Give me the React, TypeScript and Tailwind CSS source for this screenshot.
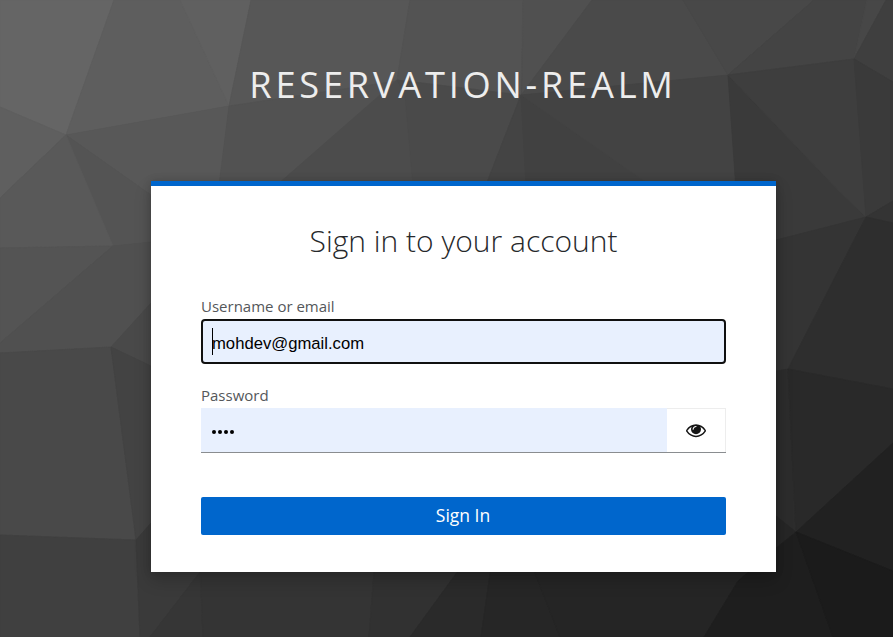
const facets: [string, string][] = [
  ['0,0 114,0 66,135 0,107', '#656565'],
  ['0,107 66,135 0,198', '#5f5f5f'],
  ['114,0 180,0 229,106 66,135', '#5e5e5e'],
  ['180,0 251,0 229,106', '#606060'],
  ['66,135 229,106 219,190 151,195', '#585858'],
  ['66,135 151,195 151,242 113,246', '#545454'],
  ['66,135 113,246 0,248 0,198', '#595959'],
  ['0,248 113,246 0,343', '#545454'],
  ['113,246 151,242 151,303 111,347 0,353 0,343', '#505050'],
  ['151,303 151,366 111,347', '#494949'],
  ['0,353 111,347 136,540 0,535', '#494949'],
  ['111,347 151,366 151,523 136,540', '#434343'],
  ['0,535 136,540 140,637 0,637', '#404040'],
  ['136,540 151,523 160,560 200,572 150,637 140,637', '#3a3a3a'],
  ['200,572 203,637 150,637', '#363636'],
  ['200,560 375,560 369,637 203,637', '#343434'],
  ['375,560 466,560 410,637 369,637', '#313131'],
  ['466,560 492,560 481,637 410,637', '#2a2a2a'],
  ['492,560 530,560 560,637 481,637', '#262626'],
  ['530,560 776,560 738,581 704,637 560,637', '#252525'],
  ['251,0 410,0 397,81 370,103 229,106', '#575757'],
  ['229,106 397,81 277,185 219,185', '#525252'],
  ['410,0 523,0 521,95 397,80', '#535353'],
  ['523,0 592,0 522,95', '#505050'],
  ['592,0 683,0 728,75 521,95', '#4a4a4a'],
  ['683,0 814,0 728,75', '#484848'],
  ['814,0 867,0 854,59 728,75', '#444444'],
  ['867,0 886,0 854,59', '#474747'],
  ['886,0 893,0 893,82 854,59', '#3f3f3f'],
  ['397,80 405,95 413,185 277,185', '#4c4c4c'],
  ['397,80 521,95 486,185 413,185 405,95', '#4a4a4a'],
  ['521,95 526,185 486,185', '#444444'],
  ['521,95 650,185 526,185', '#414141'],
  ['521,95 728,75 736,185 650,185', '#434343'],
  ['728,75 838,190 866,217 776,240 776,190 736,190', '#3a3a3a'],
  ['728,75 854,59 866,217 838,190', '#3e3e3e'],
  ['854,59 893,82 893,201 866,217', '#3a3a3a'],
  ['866,217 893,201 893,223', '#343434'],
  ['776,240 866,217 788,369 776,371', '#343434'],
  ['866,217 893,223 893,389 788,369', '#2e2e2e'],
  ['776,371 788,369 796,532 776,516', '#2c2c2c'],
  ['788,369 893,389 893,443 796,532', '#292929'],
  ['776,516 796,532 776,548', '#262626'],
  ['893,443 893,571 796,532', '#212121'],
  ['776,548 796,532 833,637 704,637 738,581', '#1e1e1e'],
  ['796,532 893,571 893,637 833,637', '#1b1b1b'],
];

function Background() {
  return (
    <svg aria-hidden="true" viewBox="0 0 893 637" preserveAspectRatio="none" className="absolute inset-0 size-full">
      {facets.map(([points, fill]) => (
        <polygon key={points} points={points} fill={fill} stroke={fill} strokeWidth="0.8" strokeLinejoin="round" />
      ))}
    </svg>
  );
}

function EyeIcon() {
  return (
    <svg viewBox="0 0 1792 1792" className="size-5" fill="currentColor">
      <path d="M1664 960q-152-236-381-353 61 104 61 225 0 185-131.5 316.5t-316.5 131.5-316.5-131.5-131.5-316.5q0-121 61-225-229 117-381 353 133 205 333.5 326.5t434.5 121.5 434.5-121.5 333.5-326.5zm-720-384q0-20-14-34t-34-14q-125 0-214.5 89.5t-89.5 214.5q0 20 14 34t34 14 34-14 14-34q0-86 61-147t147-61q20 0 34-14t14-34zm848 384q0 34-20 69-140 230-376.5 368.5t-499.5 138.5-499.5-139-376.5-368q-20-35-20-69t20-69q140-229 376.5-368t499.5-139 499.5 139 376.5 368q20 35 20 69z" />
    </svg>
  );
}

export default function App() {
  return (
    <div className="relative h-[637px] w-full overflow-hidden bg-[#444] font-['Open_Sans',sans-serif]">
      <Background />
      <div className="relative ml-[151px] flex w-[625px] flex-col">
        <header className="flex h-[181px] items-start justify-center pt-[60px] pr-px">
          <h1 className="text-[36.25px] leading-[48px] font-normal tracking-[3.75px] whitespace-nowrap text-[#ededed] uppercase">
            reservation-realm
          </h1>
        </header>
        <main className="h-[391px] border-t-[5px] border-[#0066cc] bg-white px-[50px] shadow-[0_8px_16px_rgba(3,3,3,0.2),0_0_8px_rgba(3,3,3,0.15)]">
          <h2 className="pt-[35px] text-center text-[30px] leading-10 font-light text-[#26282b]">
            Sign in to your account
          </h2>
          <form className="flex flex-col" onSubmit={(e) => e.preventDefault()}>
            <label className="mt-[34px] h-6 text-[15px] leading-[22px] text-[#54575a]">Username or email</label>
            <div className="flex h-[45px] items-center rounded-[4px] border-2 border-[#101010] bg-[#e8f0fe] pl-[9px]">
              <span className="h-[27px] w-px bg-black" />
              <span className="-ml-px pt-[5px] font-['Liberation_Sans',sans-serif] text-[16.67px] leading-6 text-black">
                mohdev@gmail.com
              </span>
            </div>
            <label className="mt-5 h-6 text-[15px] leading-[22px] text-[#54575a]">Password</label>
            <div className="flex h-[45px] border-b border-[#8a8d90]">
              <div className="flex w-[466px] items-center gap-[2px] bg-[#e8f0fe] pt-[3px] pl-[11px]">
                <span className="size-1 rounded-full bg-black" />
                <span className="size-1 rounded-full bg-black" />
                <span className="size-1 rounded-full bg-black" />
                <span className="size-1 rounded-full bg-black" />
              </div>
              <button
                type="button"
                aria-label="Show password"
                className="flex flex-1 items-center justify-center border-t border-r border-[#ededed] pr-px pb-[2px] text-[#151515]"
              >
                <EyeIcon />
              </button>
            </div>
            <button
              type="submit"
              className="mt-11 h-[38px] rounded-[2px] bg-[#0066cc] text-center text-[17.5px] leading-[38px] text-white"
            >
              <span className="block h-full pr-px leading-[36px]">Sign In</span>
            </button>
          </form>
        </main>
      </div>
    </div>
  );
}
